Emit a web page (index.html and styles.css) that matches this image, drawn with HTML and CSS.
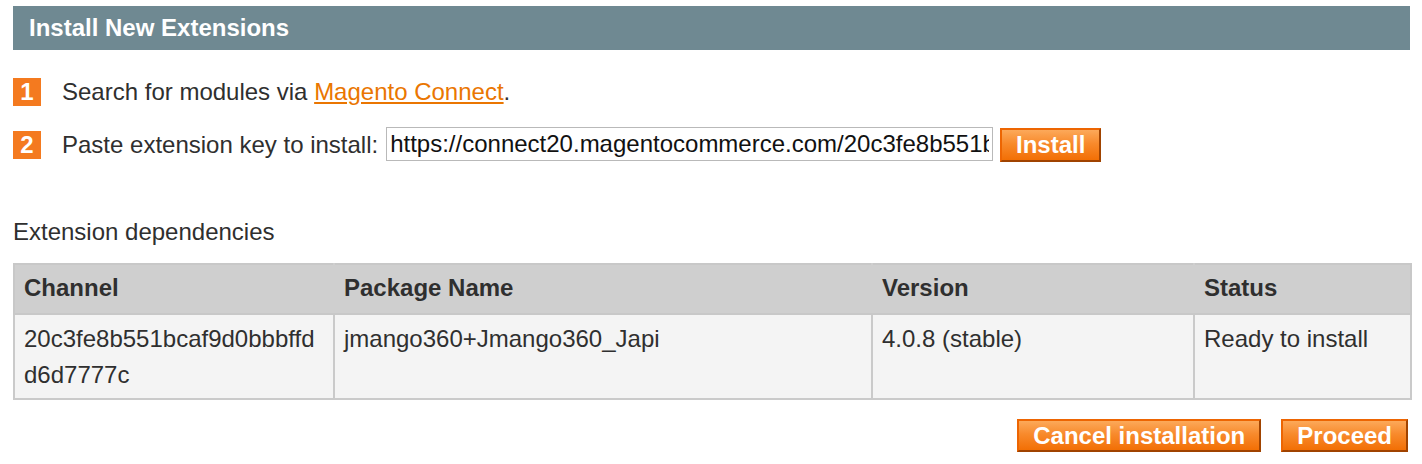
FILE: index.html
```html
<!DOCTYPE html>
<html>
<head>
<meta charset="utf-8">
<title>Install New Extensions</title>
<link rel="stylesheet" href="styles.css">
</head>
<body>
<div class="page">
  <div class="section-head">Install New Extensions</div>

  <div class="steps">
    <div class="step step-1">
      <span class="badge">1</span>
      <span class="step-text">Search for modules via <a href="#" class="link">Magento Connect</a>.</span>
    </div>
    <div class="step step-2">
      <span class="badge">2</span>
      <span class="step-text">Paste extension key to install:</span>
      <input class="key-input" type="text" value="https://connect20.magentocommerce.com/20c3fe8b551bcaf9d0bbbffdd6d7777c/jmango360+Jmango360_Japi">
      <button class="btn btn-install" type="button">Install</button>
    </div>
  </div>

  <div class="deps-title">Extension dependencies</div>

  <table class="deps">
    <colgroup>
      <col class="c-channel">
      <col class="c-package">
      <col class="c-version">
      <col class="c-status">
    </colgroup>
    <thead>
      <tr>
        <th>Channel</th>
        <th>Package Name</th>
        <th>Version</th>
        <th>Status</th>
      </tr>
    </thead>
    <tbody>
      <tr>
        <td>20c3fe8b551bcaf9d0bbbffdd6d7777c</td>
        <td>jmango360+Jmango360_Japi</td>
        <td>4.0.8 (stable)</td>
        <td>Ready to install</td>
      </tr>
    </tbody>
  </table>

  <div class="actions">
    <button class="btn btn-cancel" type="button">Cancel installation</button>
    <button class="btn btn-proceed" type="button">Proceed</button>
  </div>
</div>
</body>
</html>
```

FILE: styles.css
```css
html, body {
  margin: 0;
  padding: 0;
  background: #ffffff;
}

body {
  font-family: "Liberation Sans", Arial, Helvetica, sans-serif;
  font-size: 24px;
  line-height: 36px;
  color: #2f2f2f;
}

.page {
  padding: 6px 12px 0 13px;
}

.section-head {
  height: 44px;
  line-height: 43px;
  background: #6f8992;
  color: #ffffff;
  font-weight: bold;
  font-size: 24px;
  padding-left: 16px;
}

.steps {
  margin-top: 28px;
  display: flex;
  flex-direction: column;
  gap: 21px;
}

.step {
  display: flex;
  align-items: center;
}

.step-1 {
  height: 28px;
}

.step-2 {
  height: 35px;
}

.badge {
  flex: none;
  width: 28px;
  height: 28px;
  background: #f47a1f;
  color: #ffffff;
  font-weight: bold;
  font-size: 24px;
  line-height: 28px;
  text-align: center;
  margin-right: 21px;
}

.step-text {
  white-space: nowrap;
}

.link {
  color: #ea7601;
  text-decoration: underline;
}

.key-input {
  box-sizing: border-box;
  width: 607px;
  height: 34px;
  margin: 0 0 1px 8px;
  padding: 0 3px;
  border: 1px solid #b9b9b9;
  border-radius: 0;
  font-family: "Liberation Sans", Arial, sans-serif;
  font-size: 24px;
  color: #111111;
  background: #ffffff;
  outline: none;
}

.btn {
  box-sizing: border-box;
  height: 34px;
  padding: 0 14px;
  border: 2px solid;
  border-color: #ed6502 #a04300 #a04300 #ed6502;
  background: linear-gradient(to bottom, #fca95a 0%, #f88a2c 45%, #f26f05 100%);
  color: #ffffff;
  font-family: "Liberation Sans", Arial, sans-serif;
  font-weight: bold;
  font-size: 24px;
  line-height: 28px;
  cursor: pointer;
  border-radius: 0;
}

.btn-install {
  margin-left: 7px;
  margin-top: 1px;
  width: 101px;
  padding: 0;
}

.deps-title {
  margin-top: 52px;
  margin-bottom: 13px;
}

.deps {
  width: 1397px;
  border-collapse: collapse;
  table-layout: fixed;
  border: 2px solid #c8c8c8;
}

.c-channel { width: 320px; }
.c-package { width: 538px; }
.c-version { width: 322px; }
.c-status { width: 217px; }

.deps th {
  background: #cfcfcf;
  font-weight: bold;
  text-align: left;
  padding: 5px 9px 7px;
  border: 2px solid #c8c8c8;
  border-left-color: #cfcfcf;
  border-right-color: #cfcfcf;
  vertical-align: top;
}

.deps th:first-child {
  border-left-color: #c8c8c8;
}

.deps th:last-child {
  border-right-color: #c8c8c8;
}

.deps td {
  background: #f4f4f4;
  padding: 6px 9px 5px;
  border: 2px solid #cacaca;
  vertical-align: top;
  word-break: break-all;
}

.actions {
  margin-top: 19px;
  margin-right: 2px;
  display: flex;
  justify-content: flex-end;
  gap: 20px;
}

.actions .btn {
  height: 33px;
  padding: 0 14px;
}
```
